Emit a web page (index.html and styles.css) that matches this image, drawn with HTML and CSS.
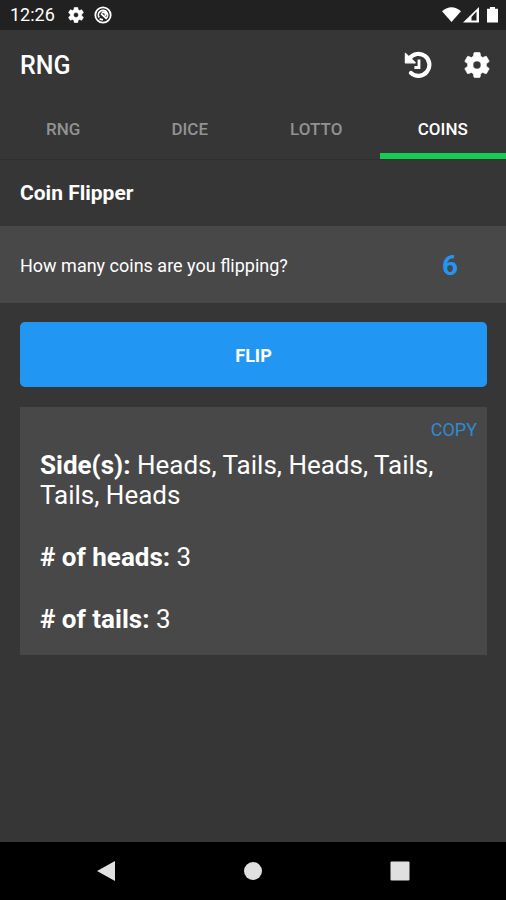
FILE: index.html
```html
<!DOCTYPE html>
<html lang="en">
<head>
<meta charset="utf-8">
<meta name="viewport" content="width=device-width, initial-scale=1">
<title>RNG</title>
<link rel="stylesheet" href="styles.css">
</head>
<body>
<svg class="defs" aria-hidden="true">
  <symbol id="gear" viewBox="2 2 20 20">
    <path d="M19.14 12.94c.04-.3.06-.61.06-.94 0-.32-.02-.64-.07-.94l2.03-1.58a.49.49 0 0 0 .12-.61l-1.92-3.32a.49.49 0 0 0-.59-.22l-2.39.96a7 7 0 0 0-1.62-.94l-.36-2.54A.48.48 0 0 0 13.92 2.4h-3.84a.47.47 0 0 0-.47.41l-.36 2.54a7.2 7.2 0 0 0-1.62.94l-2.39-.96a.48.48 0 0 0-.59.22L2.74 8.87a.47.47 0 0 0 .12.61l2.03 1.58c-.05.3-.09.63-.09.94s.02.64.07.94l-2.03 1.58a.49.49 0 0 0-.12.61l1.92 3.32c.12.22.37.29.59.22l2.39-.96c.5.38 1.03.7 1.62.94l.36 2.54c.05.24.24.41.48.41h3.84c.24 0 .44-.17.47-.41l.36-2.54a7 7 0 0 0 1.62-.94l2.39.96c.22.08.47 0 .59-.22l1.92-3.32a.47.47 0 0 0-.12-.61zM12 15.1a3.1 3.1 0 1 1 0-6.2 3.1 3.1 0 0 1 0 6.2z" stroke="currentColor" stroke-width=".5"/>
  </symbol>
</svg>
<div class="screen">
  <div class="status">
    <span class="clock">12:26</span>
    <svg class="status-icon" aria-hidden="true"><use href="#gear"/></svg>
    <svg class="status-icon wide" viewBox="0 0 18 18" aria-hidden="true">
      <circle cx="9" cy="9" r="7.7" fill="none" stroke="currentColor" stroke-width="1.8"/>
      <path d="M5.2 11.6A4.6 4.6 0 1 1 11.6 12.8M7 7.6l5.4 5M8 7a2 2 0 0 1 3 2.8M5.6 12.6a4.6 4.6 0 0 0 3.4 1" fill="none" stroke="currentColor" stroke-width="1.8"/>
    </svg>
    <svg class="signals" viewBox="0 0 56 18" aria-hidden="true">
      <path d="M0 5.2Q9.5-2.6 19 5.2L9.5 16z"/>
      <path d="M21 16.5L37 1v15.5z"/>
      <path class="cut" d="M29.5 14.500V11l5-5.500v9z"/>
      <path d="M45 2.800h3V1h5v1.800h3v13.700H45z"/>
    </svg>
  </div>
  <header class="appbar">
    <h1>RNG</h1>
    <button type="button" aria-label="History">
      <svg viewBox="0 0 28 28" aria-hidden="true">
        <path d="M5.500 7.400A11 11 0 1 1 7 22" fill="none" stroke="currentColor" stroke-width="4.200" stroke-linecap="round"/>
        <path d="M1.400 2.400v9.400h9.800z" stroke="currentColor" stroke-width="1.200" stroke-linejoin="round"/>
        <path d="M15 8.500v8h-4.600" fill="none" stroke="currentColor" stroke-width="2.800"/>
      </svg>
    </button>
    <button type="button" aria-label="Settings">
      <svg aria-hidden="true"><use href="#gear"/></svg>
    </button>
  </header>
  <nav class="tabs" aria-label="Generators">
    <a href="#rng">RNG</a>
    <a href="#dice">DICE</a>
    <a href="#lotto">LOTTO</a>
    <a href="#coins" class="active" aria-current="page">COINS</a>
  </nav>
  <main>
    <h2>Coin Flipper</h2>
    <div class="field">
      <label for="count">How many coins are you flipping?</label>
      <input id="count" type="text" inputmode="numeric" value="6">
    </div>
    <button class="flip" type="button">FLIP</button>
    <section class="result" aria-label="Result">
      <button class="copy" type="button">COPY</button>
      <p><strong>Side(s):</strong> Heads, Tails, Heads, Tails, Tails, Heads</p>
      <p><strong># of heads:</strong> 3</p>
      <p><strong># of tails:</strong> 3</p>
    </section>
  </main>
  <div class="sysnav">
    <button type="button" aria-label="Back"><svg viewBox="0 0 22 22" aria-hidden="true"><path d="M2 11L20 1v20z"/></svg></button>
    <button type="button" aria-label="Home"><svg viewBox="0 0 22 22" aria-hidden="true"><circle cx="11" cy="11" r="9"/></svg></button>
    <button type="button" aria-label="Recent apps"><svg viewBox="0 0 22 22" aria-hidden="true"><rect x="1.500" y="1.500" width="19" height="19" rx="1"/></svg></button>
  </div>
</div>
</body>
</html>
```
FILE: styles.css
```css
* { box-sizing: border-box; }

body {
  margin: 0;
  background: #363636;
  color: #fff;
  font-family: Roboto, "Liberation Sans", sans-serif;
}

h1, h2, p { margin: 0; }

button {
  padding: 0;
  border: 0;
  background: none;
  color: inherit;
  font: inherit;
  cursor: pointer;
}

svg { display: block; fill: currentColor; }

.defs { position: absolute; width: 0; height: 0; }

.screen {
  display: flex;
  flex-direction: column;
  min-height: 100vh;
}

.status {
  display: flex;
  align-items: center;
  height: 30px;
  padding: 0 8px 0 10px;
  background: #212121;
}

.clock { font-size: 18px; line-height: 30px; }

.status-icon { width: 16px; height: 16px; margin-left: 13px; }
.status-icon.wide { width: 18px; height: 18px; margin-left: 10px; }
.signals { width: 56px; height: 18px; margin-left: auto; }
.cut { fill: #212121; }

.appbar {
  display: flex;
  align-items: center;
  gap: 32px;
  height: 70px;
  padding: 0 16px 0 20px;
}

.appbar h1 {
  flex: 1;
  padding-top: 2px;
  font-size: 25px;
  font-weight: 500;
  line-height: 32px;
}

.appbar svg { width: 26px; height: 26px; }
.appbar button:first-of-type svg { width: 28px; height: 28px; }

.tabs {
  display: grid;
  grid-template-columns: repeat(4, 1fr);
  height: 60px;
  border-bottom: 1px solid #2f2f2f;
}

.tabs a {
  padding-top: 5px;
  border-bottom: 6px solid transparent;
  color: #929292;
  font-size: 17px;
  font-weight: 500;
  line-height: 48px;
  text-align: center;
  text-decoration: none;
}

.tabs .active { border-color: #13ce53; color: #fff; }

main { flex: 1; }

h2 {
  padding: 1px 20px 0;
  font-size: 21px;
  font-weight: 700;
  line-height: 65px;
}

.field {
  display: flex;
  align-items: center;
  justify-content: space-between;
  height: 77px;
  padding: 3px 20px 0;
  background: #484848;
}

.field label { font-size: 18px; line-height: 24px; }

.field input {
  width: 72px;
  padding: 0;
  border: 0;
  background: none;
  color: #2196f3;
  font: 700 28px/32px Roboto, "Liberation Sans", sans-serif;
  text-align: center;
}

.flip {
  display: block;
  width: calc(100% - 39px);
  height: 65px;
  margin: 19px 19px 20px 20px;
  padding-top: 2px;
  border-radius: 5px;
  background: #2196f3;
  font-size: 18px;
  font-weight: 700;
}

.result {
  display: flex;
  flex-direction: column;
  margin: 0 19px 20px 20px;
  padding: 10px 20px;
  background: #484848;
  font-size: 26px;
  line-height: 30px;
}

.result p { margin-bottom: 32px; }
.result p:last-child { margin-bottom: 11px; }

.copy {
  align-self: flex-end;
  margin: 0 -10px 7px 0;
  color: #3288d1;
  font-size: 18px;
  line-height: 26px;
}

.sysnav {
  display: grid;
  grid-template-columns: repeat(3, 1fr);
  height: 58px;
  padding: 0 33px;
  background: #000;
  color: #e0e0e0;
}

.sysnav svg { width: 22px; height: 22px; margin: 0 auto; }
```
